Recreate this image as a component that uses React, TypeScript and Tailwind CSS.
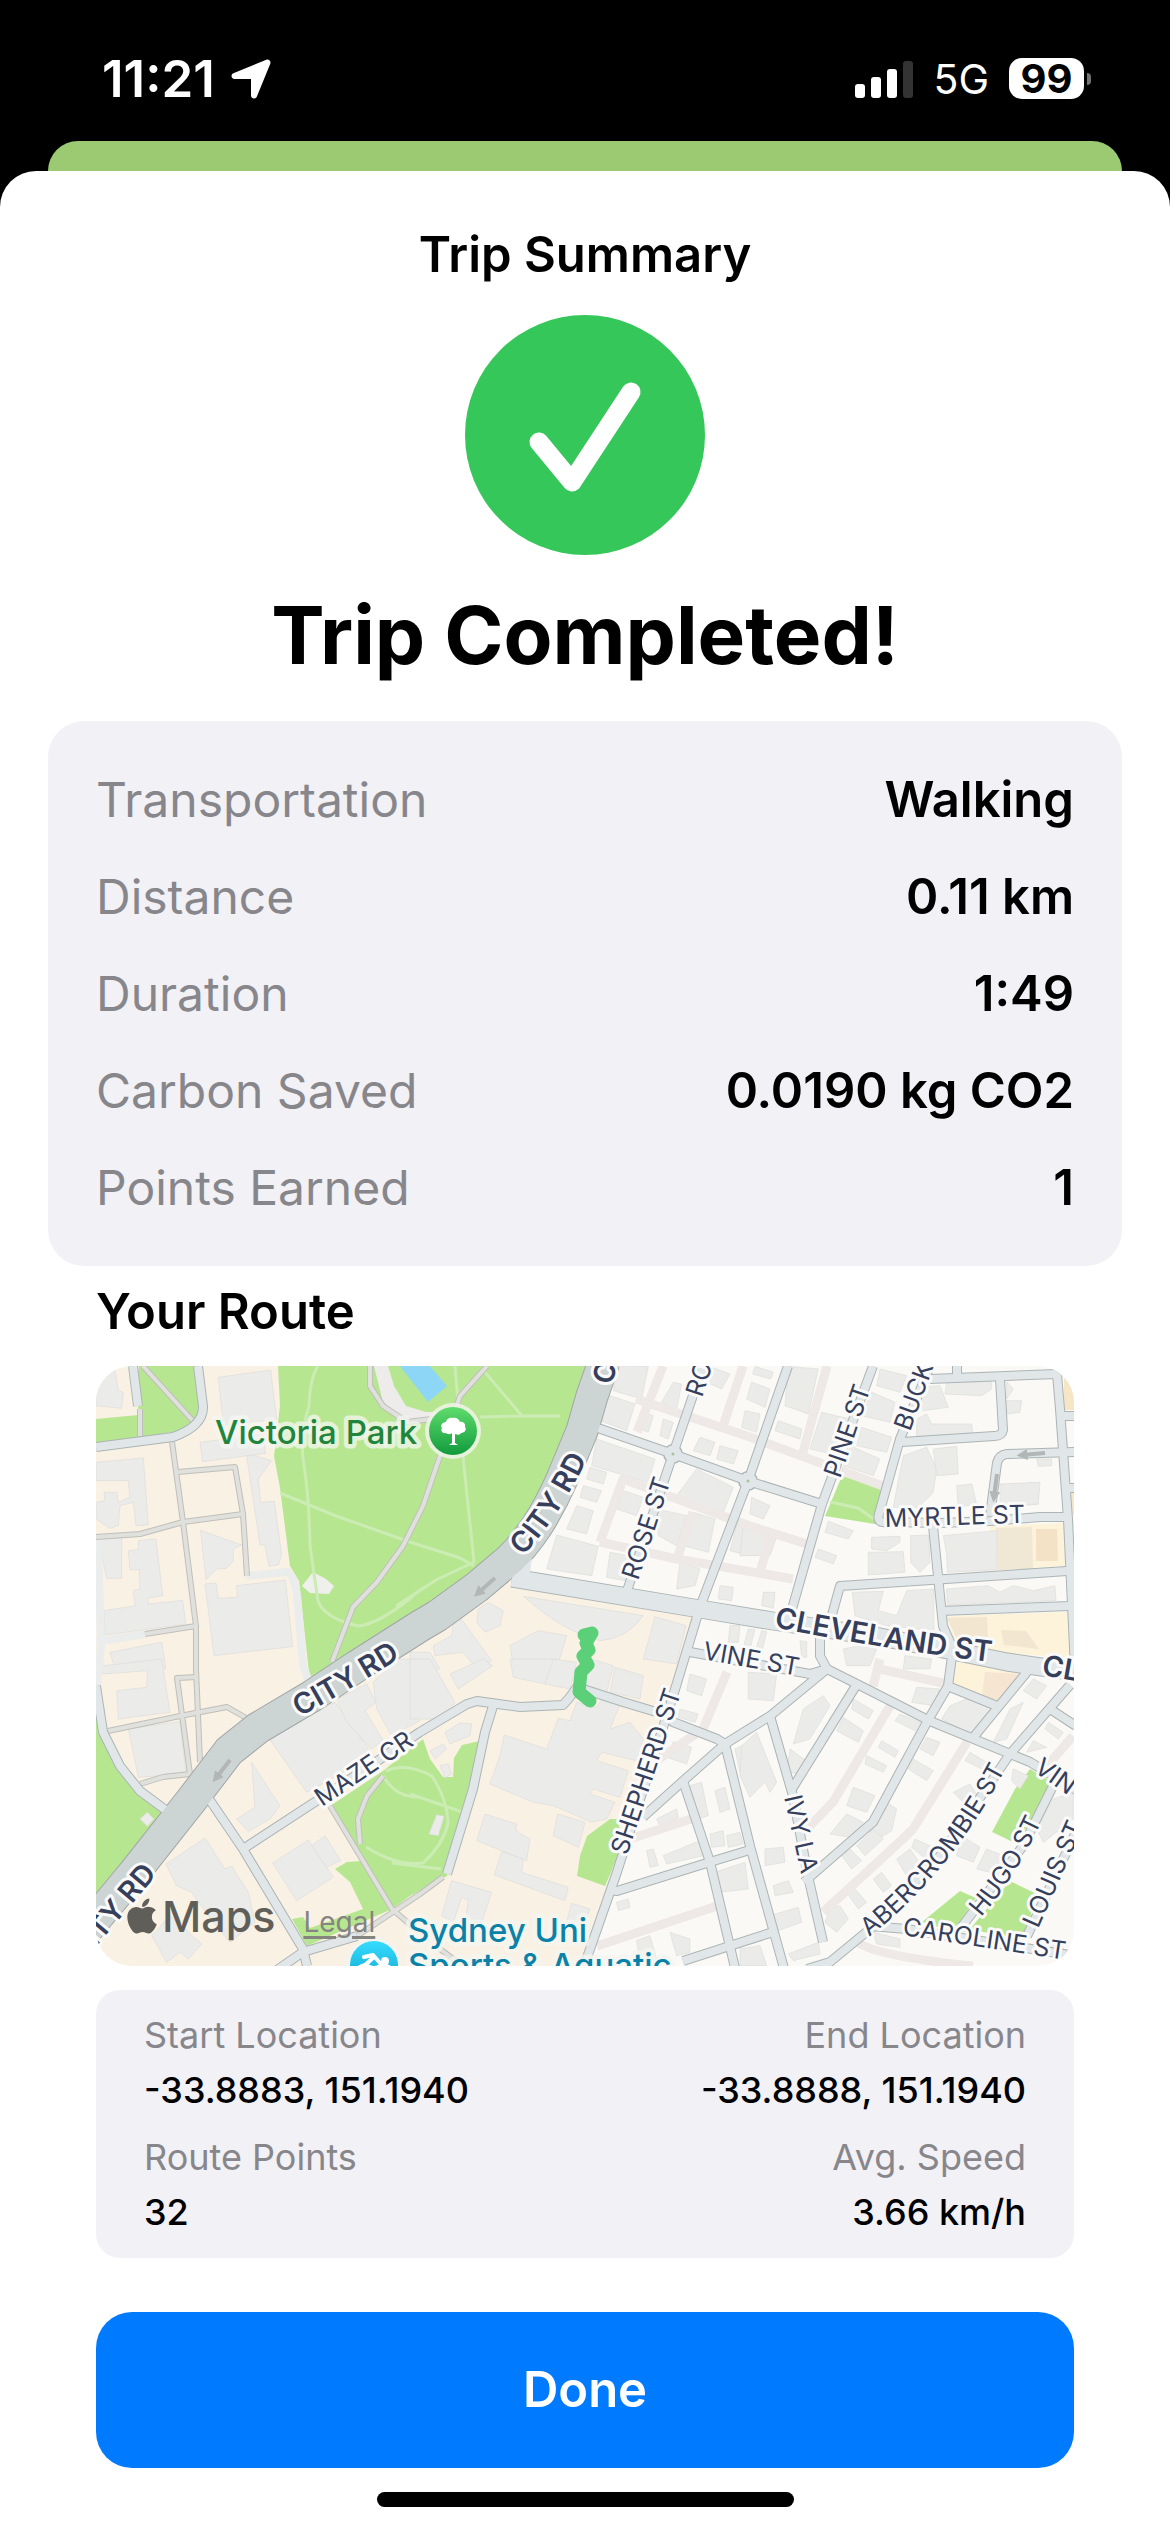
import React from 'react';
import { FaApple, FaLocationArrow } from 'react-icons/fa6';

const summary = [
  { label: 'Transportation', value: 'Walking' },
  { label: 'Distance', value: '0.11 km' },
  { label: 'Duration', value: '1:49' },
  { label: 'Carbon Saved', value: '0.0190 kg CO2' },
  { label: 'Points Earned', value: '1' },
];

const details = [
  { label: 'Start Location', value: '-33.8883, 151.1940' },
  { label: 'End Location', value: '-33.8888, 151.1940' },
  { label: 'Route Points', value: '32' },
  { label: 'Avg. Speed', value: '3.66 km/h' },
];

const parks = [
  'M182 0L184 40L178 90L184 122L194 200L203 215L214 316L261 300L324 260L381 221L441 160L486 65L507 0Z',
  'M43 0L102 0L107 46L97 63L0 78L0 53L42 49Z',
  'M0 330L7 366L24 400L44 425L71 445L0 540Z',
  'M234 440L287 405L327 373L334 393L347 411L357 411L358 392L366 379L384 375L377 423L351 510L314 530L296 543Z',
  'M239 503L251 496L266 495L296 543L211 580L196 553L207 551L214 562L267 543L254 516Z',
  'M514 453L522 453L526 480L509 520L481 510L484 490L491 470Z',
  'M746 110L786 121L779 158L729 150Z',
  'M934 403L956 416L921 478L896 466L919 423Z',
  'M826 556L864 525L880 532L857 566Z',
  'M874 563L914 515L941 528L927 575Z',
];

const parkPaths = [
  'M222 0Q214 12 213 40Q203 70 208 100Q213 130 214 180L222 235Q228 252 262 260Q285 258 324 224',
  'M184 127L240 150L314 176L364 192L378 200',
  'M359 0L364 60L369 110L378 196L340 214L300 240',
  'M388 5L426 50L384 51M426 50L464 50',
  'M287 410Q300 432 324 431M290 405Q310 396 336 410Q352 435 352 458Q346 480 327 497Q300 500 270 481M314 428L366 446M296 497L345 503',
  'M734 136L762 142L782 156',
];

const alleys = [
  'M540 33L654 71L787 120',
  'M541 66L567 0',
  'M647 0L627 60',
  'M504 176L527 113L654 160L711 178',
  'M504 176L581 193L697 213',
  'M597 146L581 193',
  'M731 0L707 86',
  'M677 163L664 206',
  'M794 340L737 436L711 463',
  'M871 376L817 463Q800 480 727 546',
  'M761 576Q780 590 877 600',
  'M784 303L851 318M784 293L777 320',
  'M977 370L951 400',
  'M631 306L607 363L560 395',
  'M534 473L601 451',
  'M501 580L621 540',
];

const footways = [
  'M44 43L44 70',
  'M47 0L97 55',
  'M76 76L87 156L100 260L100 303L104 396',
  'M82 106L139 101L147 148L151 210',
  'M0 171L44 168L87 156L147 148',
  'M49 268L100 260',
  'M12 365L84 350L131 341L152 353',
  'M101 311L81 312L94 408L67 411L44 418',
  'M391 0L364 30L344 90L327 140L307 180L281 216L257 241L236 296',
  'M274 0L274 20L287 40L311 56L344 52',
  'M234 440L296 543L318 562M347 511L324 528L261 570',
  'M287 410L271 430L262 453L264 478',
  'M344 583L361 596',
];

const plainRoads = [
  'M151 210L191 206Q200 210 202 240L207 300L214 318',
  'M2 173L5 280L0 330',
  'M0 276L49 268',
];

const streets = [
  'M37 0L42 40',
  'M102 0L107 40Q108 60 77 71L0 81',
  'M0 320L7 366L24 400L44 425L71 445L84 455',
  'M111 430L147 483L207 583L211 600M181 604L207 586L261 570',
  'M607 0L577 88L531 225',
  'M499 61L577 88L652 115L726 138',
  'M692 0L652 115L604 241L577 330L521 506L486 606',
  'M777 0L726 138L694 250',
  'M834 0L804 73L783 148Q780 158 792 156L844 157L894 155L944 151L972 151',
  'M834 13L961 8L964 43L972 153L979 303',
  'M861 0L861 10',
  'M904 13L907 64Q906 70 898 70L806 76',
  'M980 86L911 88Q903 89 901 97L894 150',
  'M966 50L980 50M970 122L980 122',
  'M837 160L847 260L857 283L852 320L831 356L777 456L708 516',
  'M734 256L744 220L971 205M844 245L974 240',
  'M724 266L724 290L731 303L674 350L629 378L587 415L547 451',
  'M594 286L714 308L731 303L761 318L834 355L934 396L980 424',
  'M147 483L274 400L324 366L371 338L381 335L424 341L467 339L474 331L481 321L527 336L567 348L577 356L621 373L629 378L654 480L689 606',
  'M397 340L389 366L377 423L351 508',
  'M587 415L614 496L640 606',
  'M515 524L521 525L614 496L657 483',
  'M587 595L677 566',
  'M674 350L697 430L712 510L727 576',
  'M761 318L696 423',
  'M931 306L876 373M854 321L901 340',
  'M711 603L734 596L774 563L844 490L914 388L974 319M951 341L980 360',
  'M957 420L927 480L864 563',
  'M980 466L931 570',
  'M774 560L811 563L891 576L980 590',
];

const cleveland = 'M416 212L447 217L604 243L677 255L784 271L857 285L911 296L980 306';
const cityRd = 'M508 -4L496 30L486 65L466 113Q455 138 441 160Q426 182 414 193L381 221L341 250L324 260L261 300L216 330L162 362L133 385L94 436L37 508L-8 562';

// Footprints are listed per tile, three units to one map unit.
const tiles = [
  {
    origin: 'translate(-6 -7) scale(0.3333)',
    shapes: [
      'M18 40L75 35L85 95L100 100L95 148L18 140Z',
      'M385 55L542 33L560 180L400 200Z',
      'M330 250L520 225L526 283L338 308Z',
      'M18 310L160 297L175 498L138 500L130 430L90 440L85 500L60 508L18 480L18 430L45 425L42 400L80 400L85 430L120 415L115 365L18 365Z',
      'M25 540L95 535L95 658L50 658Z',
      'M115 575L145 572L145 545L198 540L218 710L172 718L175 735L278 724L287 795L45 828L42 755L135 740L130 695L150 690L148 632L120 632Z',
      'M332 514L455 558L430 570L430 605L410 628L380 630L348 662Z',
      'M495 290L545 305L505 360L512 430L553 427L575 588L565 618L537 622L525 558L510 558L470 290Z',
      'M345 675L378 672L385 718L442 715L440 680L586 663L608 863L372 890Z',
      'M60 880L215 850L228 930L75 930Z',
    ],
  },
  {
    origin: 'translate(314 -7) scale(0.3333)',
    shapes: [
      'M620 22L715 22L695 120L610 95Z',
      'M600 110L675 135L650 215L570 185Z',
      'M790 70L815 75L800 150L755 130Z',
      'M905 25L960 45L935 90L890 70Z',
      'M560 240L735 300L715 370L545 320Z',
      'M540 325L590 340L580 375L530 360Z',
      'M520 380L575 395L560 430L510 415Z',
      'M500 440L550 455L530 525L470 510Z',
      'M440 528L565 562L545 650L410 630Z',
      'M860 330L970 385L940 460L800 410Z',
      'M640 395L700 415L680 470L620 450Z',
      'M740 450L830 470L800 560L745 530Z',
      'M850 460L915 480L895 580L820 560Z',
      'M600 580L655 590L645 665L590 655Z',
      'M870 235L915 250L900 290L850 275Z',
      'M700 160L730 170L715 220L680 205Z',
      'M760 180L790 190L775 240L750 230Z',
      'M930 260L985 275L970 315L920 300Z',
      'M810 610L870 630L855 680L800 690Z',
      'M930 680L970 685L965 725L925 720Z',
      'M980 500L1020 510L1020 590L960 575Z',
      'M340 712L700 770Q650 840 570 845Q460 820 340 712Z',
      'M235 730L280 755L270 800L225 820L200 790L205 750Z',
      'M735 773L828 800L800 915L700 900Z',
      'M300 860L385 815L470 830L440 930L310 920Z',
      'M130 790L150 775L245 905L200 930L160 880L75 890L70 860L125 830Z',
      'M960 800L990 800L985 850L955 850Z',
      'M0 880L60 880L90 930L0 930Z',
    ],
  },
  {
    origin: 'translate(644 -7) scale(0.3333)',
    shapes: [
      'M45 22L100 40L92 60L38 45Z',
      'M35 70L90 90L75 145L20 120Z',
      'M15 155L60 165L50 220L5 205Z',
      'M145 22L235 30L205 165L135 140Z',
      'M115 185L185 210L180 240L105 215Z',
      'M245 160L330 180L300 290L210 270Z',
      'M420 30L500 50L480 100L410 80Z',
      'M395 100L465 130L450 190L365 170Z',
      'M365 205L455 235L440 280L350 260Z',
      'M330 260L420 300L400 350L310 320Z',
      'M535 85L600 80L625 145L550 155Z',
      'M620 70L755 68L755 90L725 110L615 105Z',
      'M530 180L560 165L575 195L695 195L698 225L530 232Z',
      'M800 68L820 90L800 120Z',
      'M800 125L845 125L840 160L800 165Z',
      'M840 380L875 370L895 435L850 440Z',
      'M490 290L560 265L590 330L580 400L535 445L460 445L475 365Z',
      'M580 270L650 262L655 345L590 350Z',
      'M650 380L695 375L710 435L655 445Z',
      'M780 375L900 370L895 435L780 440Z',
      'M890 300L935 300L935 320L895 322Z',
      'M265 487L340 515L325 540L255 520Z',
      'M235 570L290 590L280 615L225 595Z',
      'M395 535L480 532L480 550L440 575L395 570Z',
      'M385 580L490 578L495 640L385 648Z',
      'M512 530L565 528L570 610L540 640L512 610Z',
      'M610 530L770 515L772 632L622 640L620 585Z',
      'M35 415L90 440L70 480L30 465Z',
      'M10 500L115 520L90 590L0 590Z',
      'M70 700L105 700L100 748L65 740Z',
      'M337 700L430 697L415 755L470 770L500 695L582 690L582 815L440 800L345 770Z',
      'M620 690L745 680L780 700L820 680L880 695L945 680L948 725L622 738Z',
      'M310 870L360 860L410 870L390 920L320 920Z',
      'M25 810L45 812L30 870L10 865Z',
      'M65 815L80 818L65 880L45 880Z',
      'M180 845L200 848L200 895L185 895Z',
      'M495 890L575 900L570 930L490 930Z',
    ],
  },
  {
    origin: 'translate(-6 293) scale(0.3333)',
    shapes: [
      'M25 22L215 0L240 160L85 180L80 95L170 85L172 35L40 45Z',
      'M115 210L270 188L288 345L145 355Z',
      'M485 310L570 440L540 480L475 517L440 480L495 445Z',
      'M535 235L640 180L735 130L850 290L650 400Z',
      'M740 120L830 75L858 130L825 155L880 245L845 270L770 190Z',
      'M850 70L920 0L990 0L990 185L905 230L860 150Z',
      'M228 615L345 537L405 630L425 622L475 700L495 790L420 850L370 790L305 700L260 680Z',
      'M548 612L655 543L730 655L620 725Z',
      'M665 560L705 530L752 605L710 625Z',
      'M185 830L240 770L335 855L295 900L270 880L230 910Z',
      'M150 480L172 460L192 480L172 502Z',
    ],
  },
  {
    origin: 'translate(314 293) scale(0.3333)',
    shapes: [
      'M0 0L60 0L135 130L90 180L0 180Z',
      'M120 45L220 0L248 20L145 90Z',
      'M300 0L440 0L405 75L310 55Z',
      'M430 0L500 10L480 90L405 75Z',
      'M545 0L610 20L590 100L520 80Z',
      'M615 25L700 50L690 120L600 100Z',
      'M105 220L150 192L185 195L180 230L120 255Z',
      'M60 275L100 255L110 270L75 300Z',
      'M90 320L115 315L125 345L105 357Z',
      'M283 228L410 270L445 178L480 185L500 130L560 145L590 100L638 115L600 210L660 190L700 240L680 305L575 280L560 305L655 335L630 415L550 390L540 405L615 430L590 480L545 490L430 440L370 430L240 375L270 290Z',
      'M225 465L320 495L318 515L360 540L350 605L275 575L200 545Z',
      'M275 578L340 600L335 640L475 685L465 725L253 648Z',
      'M443 465L525 490L505 565L430 530Z',
      'M125 665L245 700L215 790L165 790L175 725L155 715L130 790L95 770Z',
      'M485 733L540 750L520 800L470 790Z',
      'M80 467L102 472L85 530L57 525Z',
      'M790 248L845 265L830 315L770 295Z',
      'M840 45L890 60L875 110L830 95Z',
      'M810 150L865 165L855 190L805 175Z',
      'M840 380L875 370L895 470L865 480Z',
      'M915 395L945 385L960 450L930 460Z',
      'M740 480L800 450L805 475L750 505Z',
      'M710 575L730 570L745 620L720 625Z',
      'M900 525L940 515L945 560L905 565Z',
      'M950 530L990 520L1000 555L955 565Z',
      'M915 640L1005 610L1015 690L930 700Z',
      'M760 590L870 545L880 590L770 615Z',
      'M620 730L655 720L660 745L625 755Z',
      'M680 845L720 830L740 900L690 905Z',
      'M780 820L840 840L840 880L800 890Z',
      'M975 270L1020 250L1020 370L990 340Z',
    ],
  },
  {
    origin: 'translate(644 293) scale(0.3333)',
    shapes: [
      'M25 40L110 45L100 125L25 120Z',
      'M5 260L50 220L110 370L90 400L75 370L30 415L0 350Z',
      'M190 150L250 110L270 140L210 240L160 255Z',
      'M150 270L205 310L185 345L140 340Z',
      'M340 120L400 155L385 180L335 150Z',
      'M310 175L370 215L355 250L290 215Z',
      'M425 245L475 275L465 295L415 265Z',
      'M380 290L440 320L430 340L375 315Z',
      'M480 165L540 190L525 215L465 185Z',
      'M530 85L600 90L580 140L515 130Z',
      'M630 140L680 120L760 150L690 225L605 180Z',
      'M560 235L600 250L580 290L540 270Z',
      'M520 300L580 335L560 365L505 330Z',
      'M340 385L405 410L380 460L320 440Z',
      'M320 465L370 490L330 535L270 525Z',
      'M440 430L470 450L455 515L405 545L385 510Z',
      'M350 560L400 510L430 540L375 590Z',
      'M305 590L330 570L365 605L335 630Z',
      'M75 570L130 565L135 610L75 620Z',
      'M100 680L145 665L160 700L105 710Z',
      'M90 770L175 745L185 790L100 820Z',
      'M145 885L235 850L240 885L160 905Z',
      'M270 750L300 740L325 780L290 820L255 790Z',
      'M320 700L345 690L380 730L355 750Z',
      'M400 660L425 640L455 680L430 700Z',
      'M470 600L510 570L545 620L500 650Z',
      'M525 540L590 570L570 610L515 565Z',
      'M640 400L690 375L720 420L680 440Z',
      'M665 530L720 565L700 610L650 590Z',
      'M740 570L790 590L770 645L710 630Z',
      'M820 330L865 350L840 390L815 365Z',
      'M690 280L740 310L725 330L675 305Z',
      'M810 150L850 130L800 240L760 250Z',
      'M880 60L920 80L890 120L850 95Z',
      'M925 190L970 220L955 240L915 210Z',
      'M880 245L920 265L860 280Z',
      'M400 820L480 840L480 865L410 855Z',
      'M0 870L60 860L80 920L0 920Z',
      'M890 840L960 850L970 870L895 865Z',
      'M940 420L1000 400L1000 480L910 550L890 510Z',
    ],
  },
];

const shops = [
  { d: 'M894 160L970 157L971 200L896 204Z', fill: '#fdf2da' },
  { d: 'M850 250L972 246L975 292L862 284Z', fill: '#fdf2da' },
  { d: 'M862 293L926 306L900 336L856 320Z', fill: '#fdf2da' },
  { d: 'M900 162L936 161L937 203L902 204Z', fill: '#f0e7d4' },
  { d: 'M940 163L961 163L962 195L940 195Z', fill: '#f3e2c5' },
  { d: 'M851 252L891 251L892 272L862 275Z', fill: '#f2e6d1' },
  { d: 'M905 264L930 265L943 283L908 279Z', fill: '#f2e6d1' },
  { d: 'M889 306L923 308L904 335L886 330Z', fill: '#f5e5d1' },
  { d: 'M968 12L978 18L978 44L968 44Z', fill: '#f6e6c6' },
  { d: 'M975 126L978 126L978 148L975 148Z', fill: '#f6e6c6' },
];

const arrows = ['M399 212L382 227', 'M134 394L120 412', 'M949 87L926 89', 'M901 108L898 131'];

const streetLabels = [
  { id: 'city-top', d: 'M515 20L545 -70', text: 'C', major: true },
  { id: 'city-1', d: 'M427 190Q468 146 500 74', text: 'CITY RD', major: true },
  { id: 'city-2', d: 'M204 351Q262 319 330 276', text: 'CITY RD', major: true },
  { id: 'city-3', d: 'M0 581L90 474', text: 'ITY RD', major: true },
  { id: 'cleveland', d: 'M678 261Q790 284 920 299', text: 'CLEVELAND ST', major: true },
  { id: 'cleveland-2', d: 'M945 309L1060 329', text: 'CL', major: true },
  { id: 'rose-top', d: 'M606 32L626 -30', text: 'RO', major: false },
  { id: 'rose', d: 'M542 215L580 99', text: 'ROSE ST', major: false },
  { id: 'pine', d: 'M744 113L784 -5', text: 'PINE ST', major: false },
  { id: 'buck', d: 'M814 66L850 -34', text: 'BUCK', major: false },
  { id: 'myrtle', d: 'M789 161L960 156', text: 'MYRTLE ST', major: false },
  { id: 'vine', d: 'M606 293L730 315', text: 'VINE ST', major: false },
  { id: 'shepherd', d: 'M531 490L602 276', text: 'SHEPHERD ST', major: false },
  { id: 'maze', d: 'M226 441L345 361', text: 'MAZE CR', major: false },
  { id: 'ivy', d: 'M688 431L710 530', text: 'IVY LA', major: false },
  { id: 'abercrombie', d: 'M773 571Q864 500 922 378', text: 'ABERCROMBIE ST', major: false },
  { id: 'hugo', d: 'M885 551Q926 505 958 427', text: 'HUGO ST', major: false },
  { id: 'louis', d: 'M942 563L1002 427', text: 'LOUIS ST', major: false },
  { id: 'caroline', d: 'M806 569L1010 600', text: 'CAROLINE ST', major: false },
  { id: 'vine-2', d: 'M937 405L1020 463', text: 'VIN', major: false },
];

const CheckBadge = () => (
  <svg viewBox="0 0 240 240" className="size-60" aria-hidden="true">
    <circle cx="120" cy="120" r="120" fill="#35c759" />
    <path d="M74 127L107 167L166 77" fill="none" stroke="#fff" strokeWidth="19" strokeLinecap="round" strokeLinejoin="round" />
  </svg>
);

const StatusBar = () => (
  <header className="flex h-[141px] items-center justify-between pt-4 pr-[79px] pl-[102px] text-white">
    <div className="flex items-center gap-3">
      <span className="text-[51px] leading-[60px] font-semibold">11:21</span>
      <FaLocationArrow className="size-12" />
    </div>
    <div className="flex items-center gap-5">
      <svg viewBox="0 0 58 38" className="h-[38px] w-[58px]" fill="#fff" aria-hidden="true">
        <rect x="0" y="24" width="10" height="14" rx="3" />
        <rect x="16" y="17" width="10" height="21" rx="3" />
        <rect x="32" y="9" width="10" height="29" rx="3" />
        <rect x="48" y="1" width="10" height="37" rx="3" fillOpacity="0.2" />
      </svg>
      <span className="text-[41px] leading-[50px]">5G</span>
      <div className="flex items-center gap-[3px]">
        <span className="flex h-[41px] w-[75px] items-center justify-center rounded-[13px] bg-white text-[40px] leading-[41px] font-bold text-black">99</span>
        <span className="h-3 w-1 rounded-r-full bg-neutral-500" />
      </div>
    </div>
  </header>
);

const RouteMap = () => (
  <div className="relative overflow-hidden rounded-[36px]">
    <svg viewBox="0 0 978 600" className="block w-full" fill="none" strokeLinejoin="round" role="img" aria-label="Route map">
      <defs>
        <linearGradient id="park-pin" x1="0" y1="0" x2="0" y2="1">
          <stop offset="0" stopColor="#5fdc6c" />
          <stop offset="1" stopColor="#119a3d" />
        </linearGradient>
        <linearGradient id="pool-pin" x1="0" y1="0" x2="0" y2="1">
          <stop offset="0" stopColor="#36dcff" />
          <stop offset="1" stopColor="#0aa0c8" />
        </linearGradient>
        <marker id="arrow-head" viewBox="0 0 10 10" refX="5" refY="5" markerWidth="11" markerHeight="11" markerUnits="userSpaceOnUse" orient="auto">
          <path d="M0 0L10 5L0 10Z" fill="#b3b6b6" />
        </marker>
        {streetLabels.map((l) => (
          <path key={l.id} id={l.id} d={l.d} />
        ))}
      </defs>

      <rect width="978" height="600" fill="#faf9f5" />
      <path d="M0 0L507 0L441 160L414 210L447 217L604 243L486 600L0 600Z" fill="#faf1e5" />
      {shops.map((s) => (
        <path key={s.d} d={s.d} fill={s.fill} />
      ))}

      <g fill="#b7e690">
        {parks.map((d) => (
          <path key={d} d={d} />
        ))}
      </g>
      <path d="M278 0L292 0L298 20L310 40L330 46L344 46L344 56L311 56L287 36Z" fill="#edecea" />
      <path d="M304 0L332 36L351 20L334 0Z" fill="#8dd6f6" />
      <path d="M206 220L217 206L230 213L238 220L233 228L214 227Z" fill="#efefeb" />
      <g stroke="#cbecb3" strokeWidth="3">
        {parkPaths.map((d) => (
          <path key={d} d={d} />
        ))}
      </g>

      {tiles.map((t) => (
        <g key={t.origin} transform={t.origin} fill="#ebebea" stroke="#dcdcda" strokeWidth="2">
          {t.shapes.map((d) => (
            <path key={d} d={d} />
          ))}
        </g>
      ))}
      <g stroke="#eee8e7" strokeWidth="9">
        {alleys.map((d) => (
          <path key={d} d={d} />
        ))}
      </g>

      <g stroke="#eaedec" strokeWidth="8">
        {plainRoads.map((d) => (
          <path key={d} d={d} />
        ))}
      </g>
      <g stroke="#bfbfbb" strokeWidth="6">
        {footways.map((d) => (
          <path key={d} d={d} />
        ))}
      </g>
      <g stroke="#e0e0dc" strokeWidth="4">
        {footways.map((d) => (
          <path key={d} d={d} />
        ))}
      </g>
      <g stroke="#acb4b5">
        <g strokeWidth="10">
          {streets.map((d) => (
            <path key={d} d={d} />
          ))}
        </g>
        <circle cx="577" cy="88" r="9" strokeWidth="2" />
        <circle cx="652" cy="115" r="9" strokeWidth="2" />
        <path d={cleveland} strokeWidth="19" />
      </g>
      <path d={cityRd} stroke="#a0a6a7" strokeWidth="33" />
      <g stroke="#e1e7e8">
        <g strokeWidth="8">
          {streets.map((d) => (
            <path key={d} d={d} />
          ))}
        </g>
        <path d={cleveland} strokeWidth="17" />
      </g>
      <g fill="#a9c29a" stroke="#e1e7e8" strokeWidth="7">
        <circle cx="577" cy="88" r="5" />
        <circle cx="652" cy="115" r="5" />
      </g>
      <path d="M432 186L430 204L418 210" stroke="#e1e7e8" strokeWidth="9" />
      <path d={cityRd} stroke="#cdd4d4" strokeWidth="31" />
      <g stroke="#b3b6b6" strokeWidth="4">
        {arrows.map((d) => (
          <path key={d} d={d} markerEnd="url(#arrow-head)" />
        ))}
      </g>

      <path
        d="M488 269L496 267L490 277L493 284L487 290L492 299L485 306L483 326L494 335"
        stroke="#5bd079"
        strokeWidth="13"
        strokeLinecap="round"
      />

      <g fill="#353f5b" stroke="#fbfafa" strokeWidth="6" className="[paint-order:stroke]">
        {streetLabels.map((l) => (
          <text key={l.id} className={l.major ? 'text-[29px] font-semibold' : 'text-[25px]'}>
            <textPath href={`#${l.id}`}>{l.text}</textPath>
          </text>
        ))}
      </g>

      <g stroke="#f4f6f0" strokeWidth="9" strokeOpacity="0.75" className="text-[33px] font-medium [paint-order:stroke]">
        <text x="119" y="78" fill="#1f843c">Victoria Park</text>
        <text x="312" y="576" fill="#0a82a8">Sydney Uni</text>
        <text x="312" y="611" fill="#0a82a8">Sports &amp; Aquatic</text>
      </g>

      {/* Park pin */}
      <circle cx="357" cy="65" r="28" fill="#eef3e8" fillOpacity="0.85" />
      <circle cx="357" cy="65" r="24" fill="url(#park-pin)" />
      <path
        d="M357 52C353 51 350 54 350 56C346 56 344 60 346 62C344 65 347 68 350 67C352 69 355 68 356 67L356 77L353 79L362 79L359 77L359 68C362 69 364 69 365 67C369 67 371 63 369 61C370 58 367 55 364 56C363 53 360 51 357 52Z"
        fill="#fff"
      />

      {/* Pool pin */}
      <circle cx="278" cy="599" r="28" fill="#f2f4f0" fillOpacity="0.9" />
      <circle cx="278" cy="599" r="24" fill="url(#pool-pin)" />
      <circle cx="289" cy="595" r="4" fill="#fff" />
      <path d="M268 591L277 589L284 597M268 600L278 591" stroke="#fff" strokeWidth="4" strokeLinecap="round" />
      <path d="M263 601Q268 597 273 600T283 600T294 601" stroke="#fff" strokeWidth="3" />
    </svg>

    <div className="absolute bottom-6 left-[26px] flex items-end gap-7 text-[#5f5e59]">
      <span className="flex items-center text-[43px] leading-[52px] font-medium">
        <FaApple className="size-10" />
        Maps
      </span>
      <a href="#legal" className="text-[28px] leading-[40px] text-[#85847f] underline decoration-[3px] underline-offset-4">
        Legal
      </a>
    </div>
  </div>
);

const App: React.FC = () => {
  return (
    <div className="flex min-h-screen flex-col bg-black font-['Inter',sans-serif] text-black">
      <StatusBar />
      <div className="mx-12 h-[30px] rounded-t-[36px] bg-[#9bca72]" />

      <main className="flex flex-1 flex-col rounded-t-[36px] bg-white px-12 pt-[54px] pb-6">
        <h1 className="text-center text-[49px] leading-[60px] font-semibold">Trip Summary</h1>
        <div className="mt-[30px] flex justify-center">
          <CheckBadge />
        </div>
        <h2 className="mt-[30px] text-center text-[80px] leading-[100px] font-bold">Trip Completed!</h2>

        <dl className="mt-9 flex flex-col gap-9 rounded-[36px] bg-[#f2f1f6] p-12 leading-[61px]">
          {summary.map((row) => (
            <div key={row.label} className="flex items-baseline justify-between">
              <dt className="text-[48px] text-[#87868b]">{row.label}</dt>
              <dd className="text-[49px] font-semibold">{row.value}</dd>
            </div>
          ))}
        </dl>

        <section className="mt-4 px-12">
          <h3 className="text-[49px] leading-[60px] font-semibold">Your Route</h3>
          <div className="mt-6">
            <RouteMap />
          </div>

          <dl className="mt-6 grid grid-cols-2 gap-x-6 gap-y-6 rounded-3xl bg-[#f2f1f6] px-12 py-6 text-[36px] leading-[43px]">
            {details.map((item) => (
              <div key={item.label} className="flex flex-col gap-3 even:text-right">
                <dt className="text-[#87868b]">{item.label}</dt>
                <dd className="font-medium">{item.value}</dd>
              </div>
            ))}
          </dl>

          <button type="button" className="mt-[54px] h-[156px] w-full rounded-[36px] bg-[#007aff] text-[49px] leading-[60px] font-semibold text-white">
            Done
          </button>
        </section>

        <div className="mx-auto mt-6 h-[15px] w-[417px] rounded-full bg-black" />
      </main>
    </div>
  );
};

export default App;
